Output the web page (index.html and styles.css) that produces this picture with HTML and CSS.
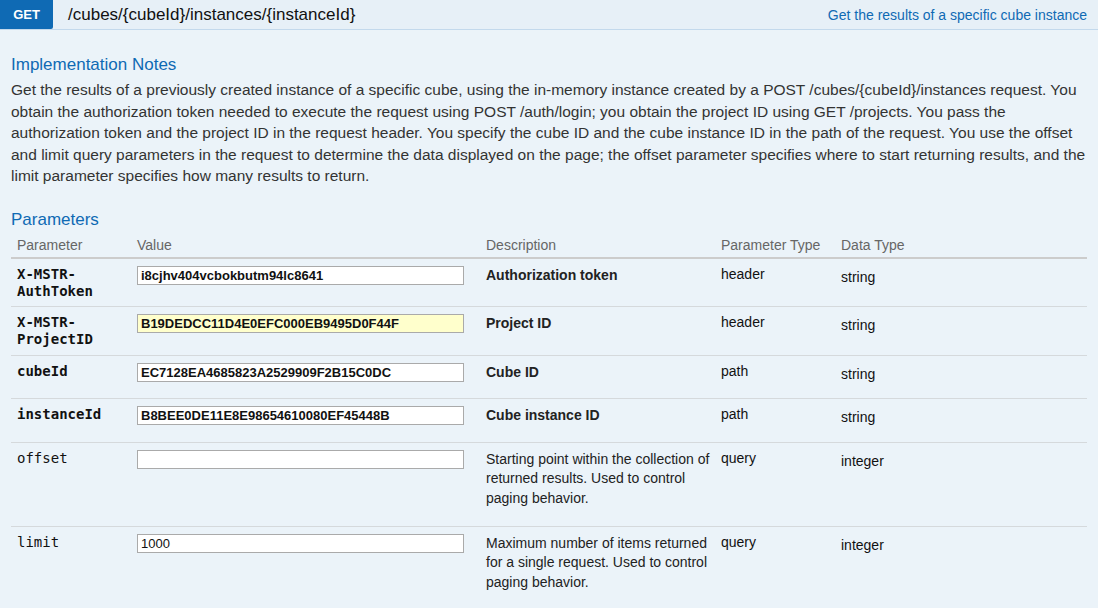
FILE: index.html
```html
<!DOCTYPE html>
<html>
<head>
<meta charset="utf-8">
<link rel="stylesheet" href="styles.css">
</head>
<body>
<div class="op">
  <div class="op-head">
    <span class="verb">GET</span>
    <span class="path">/cubes/{cubeId}/instances/{instanceId}</span>
    <span class="summary">Get the results of a specific cube instance</span>
  </div>
  <div class="op-body">
    <h4 class="section-title">Implementation Notes</h4>
    <p class="notes">Get the results of a previously created instance of a specific cube, using the in-memory instance created by a POST /cubes/{cubeId}/instances request. You obtain the authorization token needed to execute the request using POST /auth/login; you obtain the project ID using GET /projects. You pass the authorization token and the project ID in the request header. You specify the cube ID and the cube instance ID in the path of the request. You use the offset and limit query parameters in the request to determine the data displayed on the page; the offset parameter specifies where to start returning results, and the limit parameter specifies how many results to return.</p>
    <h4 class="section-title params-title">Parameters</h4>
    <table class="params">
      <colgroup>
        <col class="c-name"><col class="c-value"><col class="c-desc"><col class="c-ptype"><col class="c-dtype">
      </colgroup>
      <thead>
        <tr><th>Parameter</th><th>Value</th><th>Description</th><th>Parameter Type</th><th>Data Type</th></tr>
      </thead>
      <tbody>
        <tr>
          <td class="name req">X-MSTR-<br>AuthToken</td>
          <td><input class="val" type="text" value="i8cjhv404vcbokbutm94lc8641"></td>
          <td class="desc req">Authorization token</td>
          <td class="ptype">header</td>
          <td class="dtype">string</td>
        </tr>
        <tr>
          <td class="name req">X-MSTR-<br>ProjectID</td>
          <td><input class="val filled" type="text" value="B19DEDCC11D4E0EFC000EB9495D0F44F"></td>
          <td class="desc req">Project ID</td>
          <td class="ptype">header</td>
          <td class="dtype">string</td>
        </tr>
        <tr>
          <td class="name req">cubeId</td>
          <td><input class="val" type="text" value="EC7128EA4685823A2529909F2B15C0DC"></td>
          <td class="desc req">Cube ID</td>
          <td class="ptype">path</td>
          <td class="dtype">string</td>
        </tr>
        <tr>
          <td class="name req">instanceId</td>
          <td><input class="val" type="text" value="B8BEE0DE11E8E98654610080EF45448B"></td>
          <td class="desc req">Cube instance ID</td>
          <td class="ptype">path</td>
          <td class="dtype">string</td>
        </tr>
        <tr>
          <td class="name">offset</td>
          <td><input class="val opt" type="text" value=""></td>
          <td class="desc"><div class="desc-text">Starting point within the collection of returned results. Used to control paging behavior.</div></td>
          <td class="ptype">query</td>
          <td class="dtype">integer</td>
        </tr>
        <tr>
          <td class="name">limit</td>
          <td><input class="val opt" type="text" value="1000"></td>
          <td class="desc"><div class="desc-text">Maximum number of items returned for a single request. Used to control paging behavior.</div></td>
          <td class="ptype">query</td>
          <td class="dtype">integer</td>
        </tr>
      </tbody>
    </table>
  </div>
</div>
</body>
</html>
```

FILE: styles.css
```css
html, body {
  margin: 0;
  padding: 0;
}
body {
  background: #ebf3f9;
  font-family: "Liberation Sans", Arial, sans-serif;
  color: #333;
  width: 1098px;
  height: 608px;
  overflow: hidden;
}
.op-head {
  display: flex;
  align-items: center;
  height: 29px;
  background: #e7f0f7;
  border-bottom: 1px solid #c3d9ec;
}
.verb {
  display: flex;
  align-items: center;
  justify-content: center;
  width: 53px;
  height: 29px;
  background: #0f6ab4;
  color: #fff;
  font-weight: bold;
  font-size: 13px;
  border-bottom-right-radius: 2px;
}
.path {
  margin-left: 15px;
  font-size: 17px;
  color: #111;
}
.summary {
  margin-left: auto;
  margin-right: 11px;
  font-size: 14px;
  color: #0f6ab4;
}
.op-body {
  padding: 0 11px;
}
.section-title {
  margin: 0;
  font-weight: normal;
  font-size: 17px;
  color: #0f6ab4;
  padding-top: 25px;
  line-height: 20px;
}
.notes {
  margin: 4px 0 0;
  font-size: 15.5px;
  line-height: 21.5px;
  color: #333;
}
.params-title {
  padding-top: 23px;
}
.params {
  width: 100%;
  margin-top: 6px;
  border-collapse: collapse;
  table-layout: fixed;
}
.c-name { width: 120px; }
.c-value { width: 349px; }
.c-desc { width: 235px; }
.c-ptype { width: 120px; }
.params th {
  text-align: left;
  font-weight: normal;
  font-size: 14px;
  color: #666;
  padding: 1px 6px 4px;
  line-height: 16px;
  border-bottom: 2px solid #ccc;
}
.params td {
  vertical-align: top;
  padding: 7px 6px 6.5px;
  border-bottom: 1px solid #d5d9dc;
  font-size: 14px;
}
.params tbody tr:last-child td {
  border-bottom: none;
}
.name {
  font-family: "DejaVu Sans Mono", monospace;
  font-size: 14px;
  line-height: 17px;
  color: #111;
}
.name.req {
  font-weight: bold;
}
.val {
  display: block;
  box-sizing: border-box;
  width: 327px;
  height: 19px;
  margin: 0 0 10px;
  padding: 1px 3px;
  border: 1px solid #aaa;
  background: #fff;
  font-family: "Liberation Sans", Arial, sans-serif;
  font-weight: bold;
  font-size: 13px;
  color: #111;
}
.val.filled {
  background: #ffffcc;
}
.val.opt {
  font-weight: normal;
}
.params td.desc {
  line-height: 19.5px;
  color: #222;
  padding-right: 0;
}
.desc.req {
  font-weight: bold;
}
.desc-text {
  margin-bottom: 11px;
}
.ptype {
  line-height: 16px;
  color: #111;
}
.params td.dtype {
  line-height: 16px;
  color: #111;
  padding-top: 10px;
}
```
